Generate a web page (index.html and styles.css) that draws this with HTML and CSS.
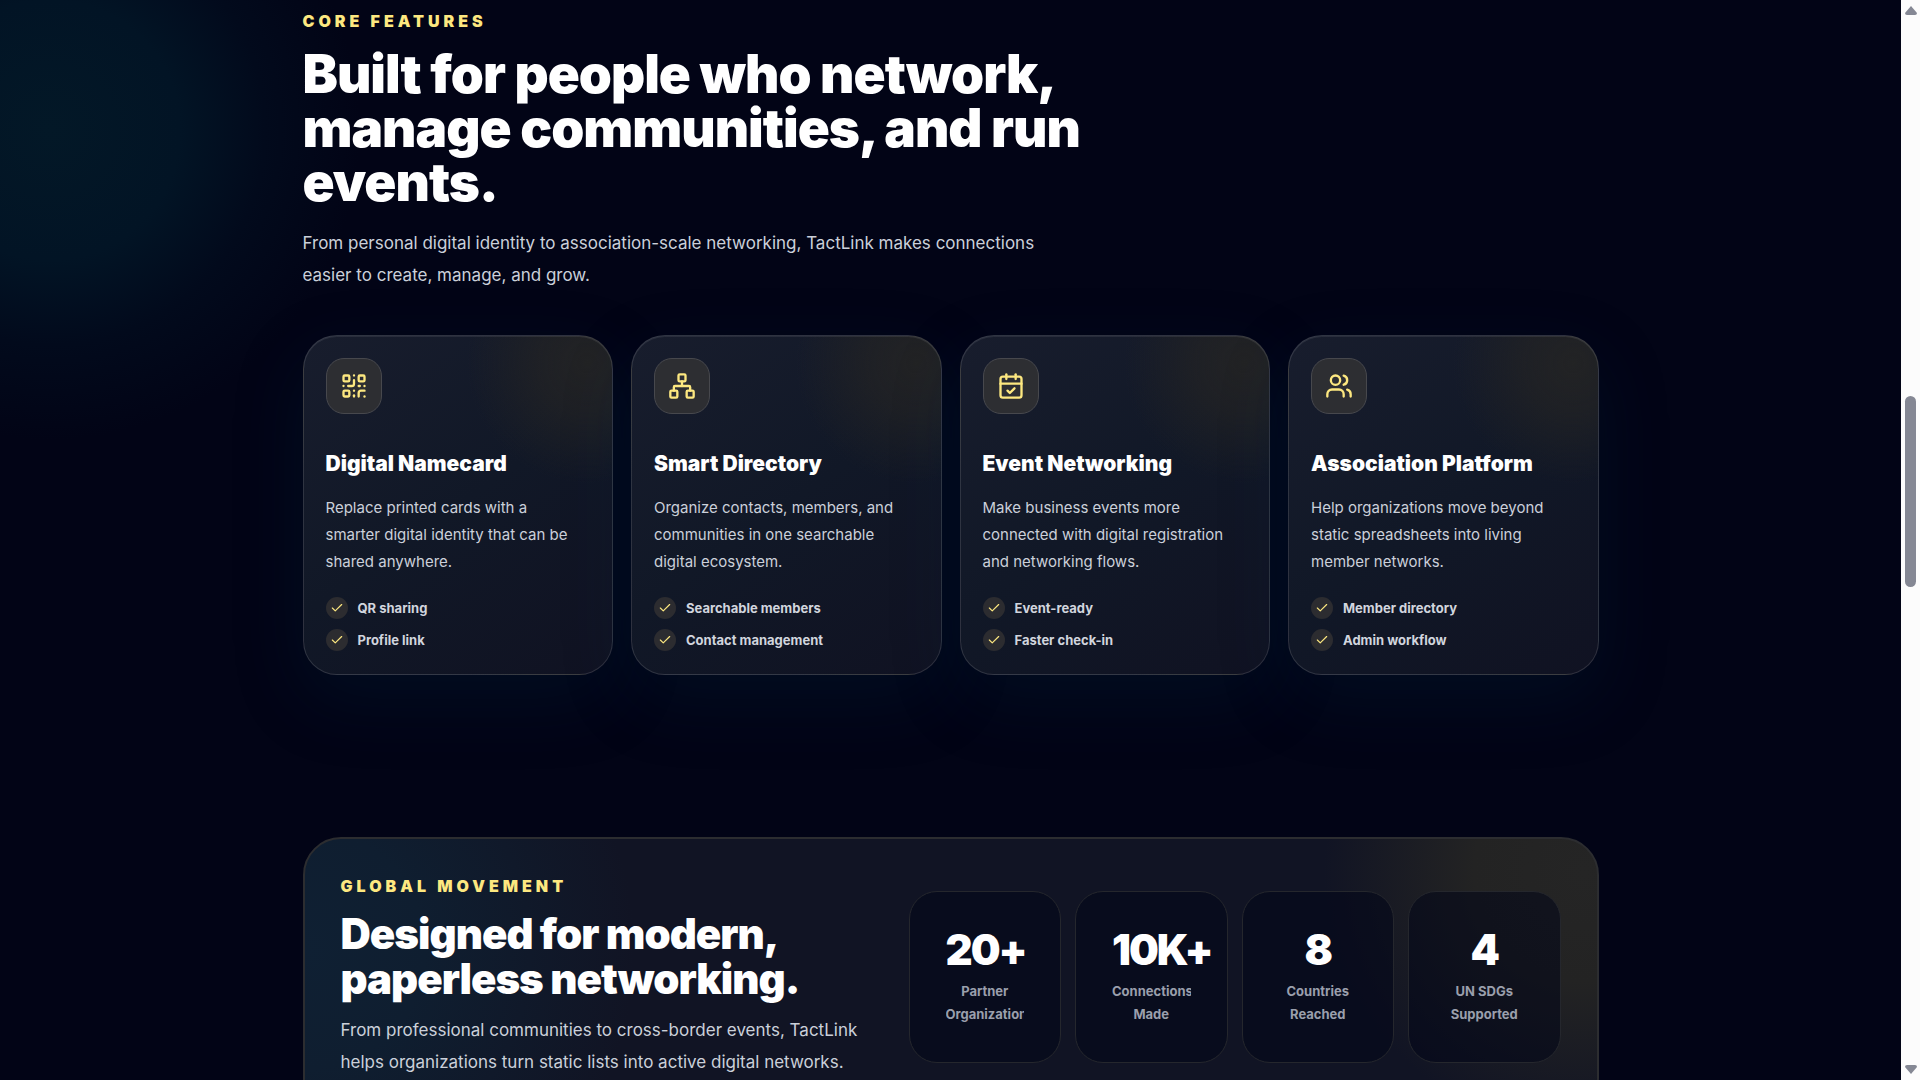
FILE: index.html
```html
<!DOCTYPE html>
<html lang="en">
<head>
<meta charset="UTF-8">
<meta name="viewport" content="width=device-width, initial-scale=1.0">
<title>TactLink - Core Features</title>
<link rel="stylesheet" href="styles.css">
</head>
<body>
<main class="page">
    <section class="container features">
        <p class="eyebrow">Core Features</p>
        <h2 class="title">Built for people who network, manage communities, and run events.</h2>
        <p class="lead">From personal digital identity to association-scale networking, TactLink makes connections easier to create, manage, and grow.</p>

        <div class="cards">
            <article class="card">
                <div class="card-icon">
                    <svg viewBox="0 0 24 24"><rect width="5" height="5" x="3" y="3" rx="1"/><rect width="5" height="5" x="16" y="3" rx="1"/><rect width="5" height="5" x="3" y="16" rx="1"/><path d="M21 16h-3a2 2 0 0 0-2 2v3"/><path d="M21 21v.01"/><path d="M12 7v3a2 2 0 0 1-2 2H7"/><path d="M3 12h.01"/><path d="M12 3h.01"/><path d="M12 16v.01"/><path d="M16 12h1"/><path d="M21 12v.01"/><path d="M12 21v-1"/></svg>
                </div>
                <h3>Digital Namecard</h3>
                <p>Replace printed cards with a smarter digital identity that can be shared anywhere.</p>
                <ul class="checks">
                    <li><span class="check"><svg viewBox="0 0 24 24"><path d="M20 6 9 17l-5-5"/></svg></span>QR sharing</li>
                    <li><span class="check"><svg viewBox="0 0 24 24"><path d="M20 6 9 17l-5-5"/></svg></span>Profile link</li>
                </ul>
            </article>
            <article class="card">
                <div class="card-icon">
                    <svg viewBox="0 0 24 24"><rect x="16" y="16" width="6" height="6" rx="1"/><rect x="2" y="16" width="6" height="6" rx="1"/><rect x="9" y="2" width="6" height="6" rx="1"/><path d="M5 16v-3a1 1 0 0 1 1-1h12a1 1 0 0 1 1 1v3"/><path d="M12 12V8"/></svg>
                </div>
                <h3>Smart Directory</h3>
                <p>Organize contacts, members, and communities in one searchable digital ecosystem.</p>
                <ul class="checks">
                    <li><span class="check"><svg viewBox="0 0 24 24"><path d="M20 6 9 17l-5-5"/></svg></span>Searchable members</li>
                    <li><span class="check"><svg viewBox="0 0 24 24"><path d="M20 6 9 17l-5-5"/></svg></span>Contact management</li>
                </ul>
            </article>
            <article class="card">
                <div class="card-icon">
                    <svg viewBox="0 0 24 24"><path d="M8 2v4"/><path d="M16 2v4"/><rect width="18" height="18" x="3" y="4" rx="2"/><path d="M3 10h18"/><path d="m9 16 2 2 4-4"/></svg>
                </div>
                <h3>Event Networking</h3>
                <p>Make business events more connected with digital registration and networking flows.</p>
                <ul class="checks">
                    <li><span class="check"><svg viewBox="0 0 24 24"><path d="M20 6 9 17l-5-5"/></svg></span>Event-ready</li>
                    <li><span class="check"><svg viewBox="0 0 24 24"><path d="M20 6 9 17l-5-5"/></svg></span>Faster check-in</li>
                </ul>
            </article>
            <article class="card">
                <div class="card-icon">
                    <svg viewBox="0 0 24 24"><path d="M16 21v-2a4 4 0 0 0-4-4H6a4 4 0 0 0-4 4v2"/><circle cx="9" cy="7" r="4"/><path d="M22 21v-2a4 4 0 0 0-3-3.87"/><path d="M16 3.13a4 4 0 0 1 0 7.75"/></svg>
                </div>
                <h3>Association Platform</h3>
                <p>Help organizations move beyond static spreadsheets into living member networks.</p>
                <ul class="checks">
                    <li><span class="check"><svg viewBox="0 0 24 24"><path d="M20 6 9 17l-5-5"/></svg></span>Member directory</li>
                    <li><span class="check"><svg viewBox="0 0 24 24"><path d="M20 6 9 17l-5-5"/></svg></span>Admin workflow</li>
                </ul>
            </article>
        </div>
    </section>

    <section class="container movement">
        <div class="panel">
            <div>
                <p class="eyebrow">Global Movement</p>
                <h2 class="panel-title">Designed for modern, paperless networking.</h2>
                <p class="lead">From professional communities to cross-border events, TactLink helps organizations turn static lists into active digital networks.</p>
            </div>
            <div class="stats">
                <div class="stat"><strong>20+</strong><span>Partner Organizations</span></div>
                <div class="stat"><strong>10K+</strong><span>Connections Made</span></div>
                <div class="stat"><strong>8</strong><span>Countries Reached</span></div>
                <div class="stat"><strong>4</strong><span>UN SDGs Supported</span></div>
            </div>
        </div>
    </section>
</main>

<div class="scrollbar" aria-hidden="true">
    <svg viewBox="0 0 12 9"><path d="M6 0 12 7Q12 9 10 9H2Q0 9 0 7Z"/></svg>
    <div class="track"><div class="thumb"></div></div>
    <svg viewBox="0 0 12 9"><path d="M6 9 12 2Q12 0 10 0H2Q0 0 0 2Z"/></svg>
</div>
</body>
</html>
```
FILE: styles.css
```css
* {
    margin: 0;
    padding: 0;
    box-sizing: border-box;
}
body {
    display: grid;
    grid-template-columns: 1fr 19px;
    height: 100vh;
    overflow: hidden;
    background-color: #020416;
    color: #ffffff;
    font-family: 'Inter', 'Liberation Sans', sans-serif;
}
.page {
    height: 100vh;
    overflow: hidden;
    background: radial-gradient(circle at 50px 130px, #031827 0, #021425 130px, #020a1c 215px, rgba(2, 4, 22, 0) 310px), #020416;
}
.container {
    width: 100%;
    max-width: 1344px;
    margin: 0 auto;
    padding: 0 24px;
}
.features {
    padding-top: 10px;
}
.eyebrow {
    color: #fde880;
    font-size: 16px;
    line-height: 23px;
    font-weight: 900;
    letter-spacing: 4px;
    text-transform: uppercase;
}
.title {
    max-width: 820px;
    margin-top: 14px;
    font-size: 53px;
    line-height: 54px;
    font-weight: 900;
    letter-spacing: -1px;
}
.lead {
    max-width: 760px;
    color: #cbd0da;
    font-size: 17px;
    line-height: 32px;
}
.title + .lead {
    margin-top: 18px;
}

.cards {
    display: grid;
    grid-template-columns: repeat(4, 1fr);
    gap: 18px;
    margin-top: 44px;
}
.card {
    padding: 22px 22px 23px;
    border: 1px solid rgba(255, 255, 255, 0.13);
    border-radius: 34px;
    background: radial-gradient(circle at 92% 8%, rgba(36, 36, 36, 0.9) 0, rgba(35, 35, 36, 0.7) 50px, rgba(34, 34, 36, 0) 120px), linear-gradient(145deg, #181d2d 0%, #111827 50%, #101222 100%);
    box-shadow: 0 24px 70px rgba(0, 45, 75, 0.22), inset 0 1px 0 rgba(255, 255, 255, 0.08);
}
.card-icon {
    display: grid;
    place-items: center;
    width: 56px;
    height: 56px;
    border: 1px solid #47484d;
    border-radius: 18px;
    background: #2d2e32;
}
svg {
    display: block;
    fill: none;
    stroke: #fde880;
    stroke-width: 2;
    stroke-linecap: round;
    stroke-linejoin: round;
}
.card-icon svg {
    width: 28px;
    height: 28px;
}
.card h3 {
    margin-top: 36px;
    font-size: 21px;
    line-height: 28px;
    font-weight: 900;
}
.card p {
    max-width: 252px;
    margin-top: 16px;
    color: #cbd0da;
    font-size: 15px;
    line-height: 27px;
}
.checks {
    display: grid;
    gap: 10px;
    margin-top: 22px;
    list-style: none;
}
.checks li {
    display: flex;
    align-items: center;
    gap: 10px;
    color: #d1d5de;
    font-size: 13px;
    line-height: 22px;
    font-weight: 700;
}
.check {
    display: grid;
    place-items: center;
    width: 22px;
    height: 22px;
    border-radius: 50%;
    background: #2c2c30;
}
.check svg {
    width: 14px;
    height: 14px;
}

.movement {
    padding-top: 162px;
}
.panel {
    display: grid;
    grid-template-columns: 532px 1fr;
    align-items: center;
    gap: 36px;
    padding: 36px;
    border: 2px solid #2c2d30;
    border-radius: 38px;
    background: radial-gradient(circle at 0 40%, #0f2033 0, #0f1e30 120px, rgba(17, 20, 34, 0) 330px), radial-gradient(circle at 99% 12%, #252525 0, #232323 110px, rgba(35, 35, 35, 0) 260px), #111424;
}
.panel-title {
    margin: 13px 0;
    font-size: 42px;
    line-height: 45px;
    font-weight: 900;
    letter-spacing: -1px;
}
.stats {
    display: grid;
    grid-template-columns: repeat(4, 1fr);
    gap: 14px;
}
.stat {
    min-width: 0;
    padding: 36px;
    border: 1px solid #25272d;
    border-radius: 28px;
    background: rgba(2, 6, 23, 0.55);
    text-align: center;
}
.stat strong {
    display: block;
    font-size: 42px;
    line-height: 44px;
    font-weight: 900;
    letter-spacing: -2px;
}
.stat span {
    display: block;
    overflow: hidden;
    margin-top: 8px;
    color: #9a9fac;
    font-size: 13px;
    line-height: 23px;
    font-weight: 700;
}

.scrollbar {
    display: flex;
    flex-direction: column;
    align-items: center;
    padding: 6px 0;
    background: #fcfcfc;
}
.scrollbar svg {
    width: 12px;
    height: 9px;
    fill: #858894;
    stroke: none;
}
.track {
    display: grid;
    grid-template-rows: 381fr 191fr 478fr;
    flex: 1;
    width: 11px;
}
.thumb {
    grid-row: 2;
    border-radius: 6px;
    background: #858894;
}
```
